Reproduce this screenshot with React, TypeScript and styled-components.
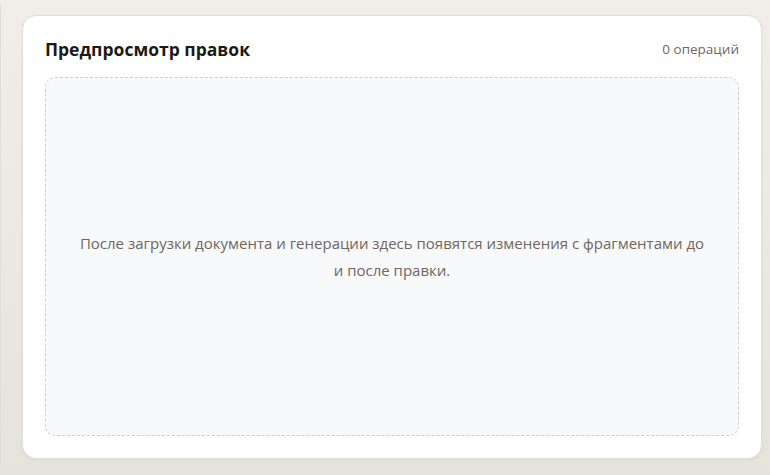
import React from 'react';
import styled, { createGlobalStyle } from 'styled-components';

const GlobalStyle = createGlobalStyle`
  html, body {
    margin: 0;
    padding: 0;
    height: 100%;
  }
  body {
    font-family: "Open Sans", "Noto Sans", sans-serif;
    background: linear-gradient(180deg, #f1eee9 0%, #e6e2dc 100%);
    overflow: hidden;
  }
`;

const Page = styled.div`
  display: flex;
  gap: 21px;
  height: 475px;
  padding: 15px 8px 16px 0;
  box-sizing: border-box;
  overflow: hidden;
`;

const SidePanel = styled.div`
  flex: 0 0 300px;
  box-sizing: border-box;
  margin: -20px 0 -20px -299px;
  background: #f6f4f0;
  border: 1px solid #e1dcd5;
  border-radius: 12px;
`;

const Card = styled.section`
  flex: 1;
  display: flex;
  flex-direction: column;
  gap: 16px;
  padding: 21px 22px 22px;
  background: #ffffff;
  border: 1px solid #e2ddd6;
  border-radius: 14px;
  box-shadow: 0 1px 3px rgba(60, 45, 30, 0.06);
`;

const CardHeader = styled.div`
  display: flex;
  justify-content: space-between;
  align-items: center;
  height: 24px;
`;

const Title = styled.h2`
  margin: 0;
  font-size: 17.5px;
  font-weight: 700;
  color: #1d1915;
`;

const Counter = styled.span`
  font-size: 13.5px;
  color: #6f6862;
`;

const EmptyState = styled.div`
  flex: 1;
  display: flex;
  align-items: center;
  justify-content: center;
  padding: 0 32px;
  background: #f8f9fb;
  border: 1px dashed #d3cdc6;
  border-radius: 10px;
`;

const EmptyText = styled.p`
  margin: 0;
  max-width: 640px;
  text-align: center;
  font-size: 15px;
  line-height: 27px;
  color: #6f665e;
`;

const App: React.FC = () => {
  return (
    <>
      <GlobalStyle />
      <Page>
        <SidePanel />
        <Card>
          <CardHeader>
            <Title>Предпросмотр правок</Title>
            <Counter>0 операций</Counter>
          </CardHeader>
          <EmptyState>
            <EmptyText>
              После загрузки документа и генерации здесь появятся изменения с фрагментами до и после правки.
            </EmptyText>
          </EmptyState>
        </Card>
      </Page>
    </>
  );
};

export default App;
